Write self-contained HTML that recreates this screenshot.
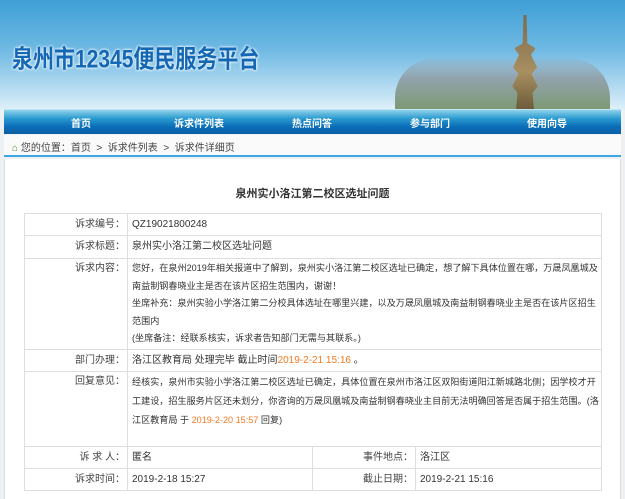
<!DOCTYPE html>
<html><head><meta charset="utf-8"><style>
*{margin:0;padding:0;box-sizing:border-box}
body{width:625px;height:494px;overflow:hidden;background:#eef1f4;font-family:"Liberation Sans","Noto Sans CJK SC",sans-serif;font-size:10px;color:#333;position:relative}
.banner{position:absolute;left:0;top:0;width:625px;height:110px;background:linear-gradient(180deg,#3f9fd6 0%,#6fb9e3 45%,#bfe0f3 85%,#dff0f9 100%)}
.city{position:absolute;left:395px;top:58px;width:215px;height:52px;background:linear-gradient(180deg,rgba(150,170,190,.2),#8e9aa0 40%,#6b8a5a 100%);border-radius:40px 40px 0 0;opacity:.85}
.tower{position:absolute;left:510px;top:15px;width:30px;height:95px;background:linear-gradient(180deg,#7a6a50,#a88f60 60%,#6b5a3a);clip-path:polygon(45% 0,55% 0,58% 30%,85% 35%,70% 42%,90% 55%,72% 62%,92% 75%,75% 82%,80% 100%,20% 100%,25% 82%,8% 75%,28% 62%,10% 55%,30% 42%,15% 35%,42% 30%)}
.logo{position:absolute;left:12px;top:40px;font-size:21px;font-weight:bold;color:#1467b5;text-shadow:0 0 3px #fff,0 0 2px #fff;transform:scaleY(1.2);transform-origin:left top}
.nav{position:absolute;left:4px;top:109px;width:617px;height:25px;background:linear-gradient(180deg,#8fd2ea 0%,#2b9bd0 35%,#0a6db7 70%,#0c5fa5 100%);border-top:1px solid #bfe6f4}
.nav span{position:absolute;top:5px;color:#fff;font-weight:bold;font-size:10px}
.crumb{position:absolute;left:4px;top:135px;width:617px;height:22px;background:#fafafa;border-bottom:2px solid #3ea6e2;padding:4px 0 0 8px;color:#444}
.crumb b{color:#4a8a2a;font-weight:normal}
.main{position:absolute;left:4px;top:159px;width:617px;height:340px;background:#fff;border-left:1px solid #ddd;border-right:1px solid #ddd}
h1{position:absolute;left:0;top:185px;width:625px;text-align:center;font-size:11px;font-weight:bold;color:#333}
table{position:absolute;left:24px;top:213px;width:578px;border-collapse:collapse;border:1px solid #bbb;table-layout:fixed}
td{border:1px solid #ddd;padding:0 4px;vertical-align:top;line-height:21px;font-size:10px;white-space:nowrap;overflow:hidden}
td.m{line-height:17.6px;padding-top:1px;font-size:9.1px}
td.l{text-align:right;color:#444;padding-right:2px;font-size:10px}
.o{color:#f47a20}
</style></head><body>
<div class="banner"><div class="city"></div><div class="tower"></div>
<div class="logo">泉州市12345便民服务平台</div></div>
<div class="nav"><span style="left:67px">首页</span><span style="left:170px">诉求件列表</span><span style="left:288px">热点问答</span><span style="left:406px">参与部门</span><span style="left:523px">使用向导</span></div>
<div class="crumb"><b>⌂</b> 您的位置：首页 &nbsp;&gt;&nbsp; 诉求件列表 &nbsp;&gt;&nbsp; 诉求件详细页</div>
<div class="main"></div>
<h1>泉州实小洛江第二校区选址问题</h1>
<table>
<colgroup><col style="width:103px"><col style="width:185px"><col style="width:103px"><col></colgroup>
<tr style="height:22px"><td class="l">诉求编号：</td><td colspan="3">QZ19021800248</td></tr>
<tr style="height:23px"><td class="l">诉求标题：</td><td colspan="3">泉州实小洛江第二校区选址问题</td></tr>
<tr style="height:91px"><td class="l m">诉求内容：</td><td class="m" colspan="3">您好，在泉州2019年相关报道中了解到，泉州实小洛江第二校区选址已确定，想了解下具体位置在哪，万晟凤凰城及<br>南益制钢春晓业主是否在该片区招生范围内，谢谢！<br>坐席补充：泉州实验小学洛江第二分校具体选址在哪里兴建，以及万晟凤凰城及南益制钢春晓业主是否在该片区招生<br>范围内<br>(坐席备注：经联系核实，诉求者告知部门无需与其联系。)</td></tr>
<tr style="height:22px"><td class="l">部门办理：</td><td colspan="3">洛江区教育局 处理完毕 截止时间<span class="o">2019-2-21 15:16</span> 。</td></tr>
<tr style="height:75px"><td class="l m">回复意见：</td><td class="m" colspan="3" style="line-height:19px">经核实，泉州市实验小学洛江第二校区选址已确定，具体位置在泉州市洛江区双阳街道阳江新城路北侧；因学校才开<br>工建设，招生服务片区还未划分，你咨询的万晟凤凰城及南益制钢春晓业主目前无法明确回答是否属于招生范围。(洛<br>江区教育局 于 <span class="o">2019-2-20 15:57</span> 回复)</td></tr>
<tr style="height:22px"><td class="l">诉 求 人：</td><td>匿名</td><td class="l">事件地点：</td><td>洛江区</td></tr>
<tr style="height:22px"><td class="l">诉求时间：</td><td>2019-2-18 15:27</td><td class="l">截止日期：</td><td>2019-2-21 15:16</td></tr>
</table>
</body></html>
